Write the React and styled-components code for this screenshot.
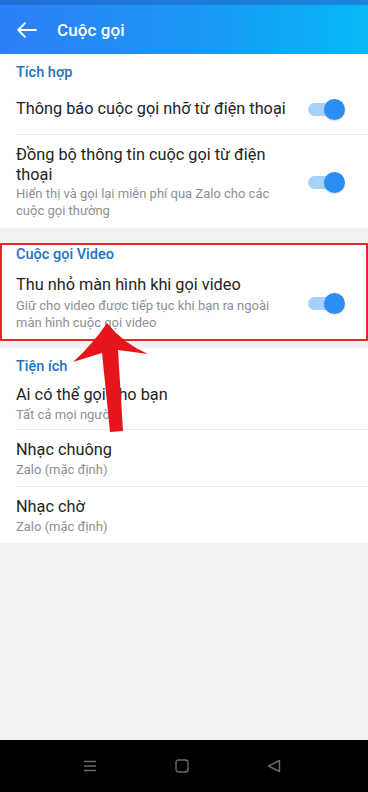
import React from 'react'
import styled, { createGlobalStyle } from 'styled-components'

const GlobalStyle = createGlobalStyle`
  html, body {
    margin: 0;
    padding: 0;
    background: #f1f2f4;
    font-family: Roboto, "Noto Sans", "Liberation Sans", sans-serif;
  }
  * { box-sizing: border-box; }
`

const Screen = styled.div`
  position: relative;
  width: 368px;
  height: 792px;
  display: flex;
  flex-direction: column;
  background: #f1f2f4;
  overflow: hidden;
`

const StatusStrip = styled.div`
  height: 5px;
  background: linear-gradient(90deg, #1f6fd8 0%, #1a86da 100%);
`

const AppBar = styled.div`
  height: 49px;
  display: flex;
  align-items: center;
  padding-left: 17px;
  gap: 20px;
  background: linear-gradient(90deg, #2d7ff8 0%, #1a98f6 55%, #06b9f5 100%);
  color: #fff;
`

const Title = styled.div`
  font-size: 17px;
  font-weight: 500;
  letter-spacing: 0.1px;
`

const Content = styled.div`
  flex: 1;
  display: flex;
  flex-direction: column;
`

const Section = styled.div`
  background: #fff;
  margin-bottom: ${({ gap }) => gap || 0}px;
  box-shadow: ${({ highlighted }) => highlighted ? 'inset 0 0 0 2px #e5242b' : 'none'};
  padding-bottom: ${({ highlighted }) => highlighted ? 2 : 0}px;
`

const SectionHead = styled.div`
  padding: ${({ top }) => top}px 16px 0;
  line-height: 20px;
  font-size: 14.5px;
  font-weight: 500;
  color: #1c72c2;
`

const Row = styled.div`
  display: flex;
  align-items: center;
  margin-left: 16px;
  padding: ${({ pt }) => pt ?? 9}px 28px ${({ pb }) => pb ?? 8}px 0;
  border-bottom: ${({ divider }) => divider ? '1px solid #ebebeb' : 'none'};
`

const Texts = styled.div`
  flex: 1;
  display: flex;
  flex-direction: column;
  gap: ${({ gap }) => gap ?? 1}px;
  padding-right: ${({ toggle }) => toggle ? 14 : 0}px;
`

const Label = styled.div`
  font-size: 16.3px;
  line-height: 20px;
  color: #1e1e1e;
`

const Sub = styled.div`
  font-size: 13px;
  line-height: 17px;
  color: #8c9095;
`

const Track = styled.div`
  position: relative;
  width: 32px;
  height: 13px;
  border-radius: 7px;
  background: #a6d1fb;
  flex-shrink: 0;
`

const Thumb = styled.div`
  position: absolute;
  top: -4px;
  right: -5px;
  width: 21px;
  height: 21px;
  border-radius: 50%;
  background: #2a8ef2;
  box-shadow: 0 1px 2px rgba(0, 0, 0, 0.15);
`

const NavBar = styled.div`
  height: 52px;
  background: #000;
  display: flex;
  align-items: center;
  justify-content: center;
  gap: 78px;
  padding-right: 4px;
`

const Overlay = styled.svg`
  position: absolute;
  left: 0;
  top: 0;
  pointer-events: none;
`

const Toggle = () => (
  <Track>
    <Thumb />
  </Track>
)

const BackArrow = () => (
  <svg width="20" height="16" viewBox="0 0 20 16" fill="none" stroke="#fff" strokeWidth="1.8" strokeLinecap="round" strokeLinejoin="round">
    <path d="M19 8H1.5M8 1.2L1.2 8L8 14.8" />
  </svg>
)

const App = () => (
  <Screen>
    <GlobalStyle />
    <StatusStrip />
    <AppBar>
      <BackArrow />
      <Title>Cuộc gọi</Title>
    </AppBar>

    <Content>
      <Section gap={15}>
        <SectionHead top={9}>Tích hợp</SectionHead>
        <Row divider pt={16} pb={15}>
          <Texts>
            <Label>Thông báo cuộc gọi nhỡ từ điện thoại</Label>
          </Texts>
          <Toggle />
        </Row>
        <Row pt={10} pb={9}>
          <Texts gap={0} toggle>
            <Label>Đồng bộ thông tin cuộc gọi từ điện thoại</Label>
            <Sub>Hiển thị và gọi lại miễn phí qua Zalo cho các cuộc gọi thường</Sub>
          </Texts>
          <Toggle />
        </Row>
      </Section>

      <Section highlighted gap={7}>
        <SectionHead top={2}>Cuộc gọi Video</SectionHead>
        <Row pt={10} pb={8}>
          <Texts gap={2} toggle>
            <Label>Thu nhỏ màn hình khi gọi video</Label>
            <Sub>Giữ cho video được tiếp tục khi bạn ra ngoài màn hình cuộc gọi video</Sub>
          </Texts>
          <Toggle />
        </Row>
      </Section>

      <Section>
        <SectionHead top={9}>Tiện ích</SectionHead>
        <Row divider pt={8} pb={6}>
          <Texts>
            <Label>Ai có thể gọi cho bạn</Label>
            <Sub>Tất cả mọi người</Sub>
          </Texts>
        </Row>
        <Row divider pt={10} pb={8}>
          <Texts>
            <Label>Nhạc chuông</Label>
            <Sub>Zalo (mặc định)</Sub>
          </Texts>
        </Row>
        <Row pt={10} pb={8}>
          <Texts>
            <Label>Nhạc chờ</Label>
            <Sub>Zalo (mặc định)</Sub>
          </Texts>
        </Row>
      </Section>
    </Content>

    <NavBar>
      <svg width="14" height="14" viewBox="0 0 14 14" stroke="#6a6a6a" strokeWidth="1.4">
        <path d="M1 2.5H13M1 7H13M1 11.5H13" />
      </svg>
      <svg width="14" height="14" viewBox="0 0 14 14" fill="none" stroke="#6a6a6a" strokeWidth="1.4">
        <rect x="1" y="1" width="12" height="12" rx="2.5" />
      </svg>
      <svg width="14" height="14" viewBox="0 0 14 14" fill="none" stroke="#6a6a6a" strokeWidth="1.4" strokeLinejoin="round">
        <path d="M12.5 1.5V12.5L1.5 7Z" />
      </svg>
    </NavBar>

    <Overlay width="368" height="792" viewBox="0 0 368 792">
      <path
        d="M107 323 Q124 344 148 354 L118 350 L123 431 L110 432 L102 353 L73 362 Q93 344 107 323 Z"
        fill="#e8141b"
      />
    </Overlay>
  </Screen>
)

export default App
